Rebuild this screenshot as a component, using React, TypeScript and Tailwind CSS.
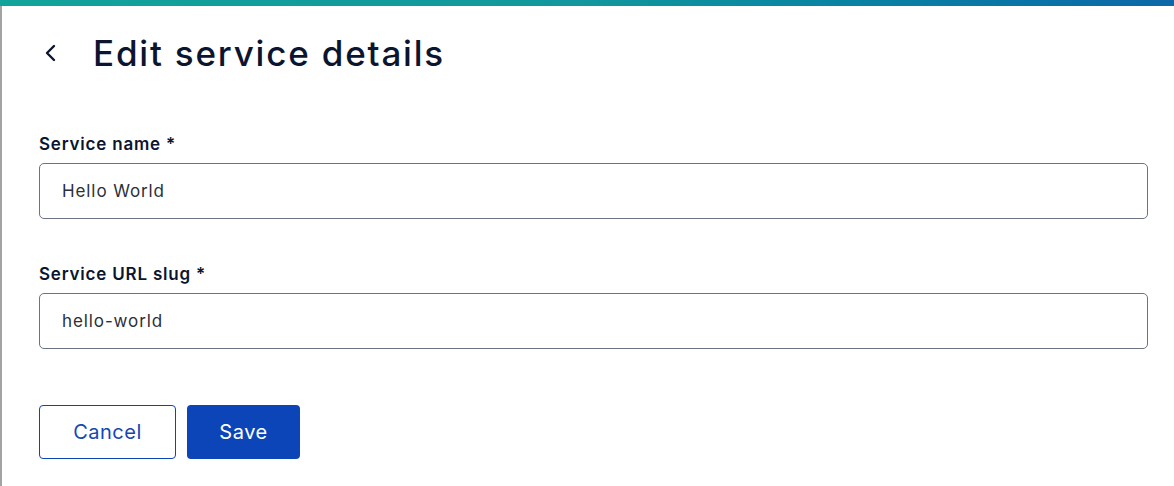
import React, { useState } from 'react';

function BackIcon() {
  return (
    <svg width="14" height="18" viewBox="0 0 14 18" fill="none" aria-hidden="true">
      <path d="M11 2L4 9L11 16" stroke="#0b1530" strokeWidth="2.4" strokeLinecap="round" strokeLinejoin="round" />
    </svg>
  );
}

function Field({ label, value, onChange }: { label: string; value: string; onChange: (v: string) => void }) {
  return (
    <div className="flex flex-col">
      <label className="text-[17px] font-semibold text-[#0b1530] leading-6 tracking-[0.8px] mb-[7px]">{label}</label>
      <input
        value={value}
        onChange={e => onChange(e.target.value)}
        className="h-[56px] w-full rounded-[5px] border border-[#6b7385] px-[22px] text-[17px] tracking-[0.9px] text-[#2a2f3a] outline-none"
      />
    </div>
  );
}

export default function App() {
  const [name, setName] = useState('Hello World');
  const [slug, setSlug] = useState('hello-world');

  return (
    <div className="w-[1174px] h-[486px] bg-white flex flex-col overflow-hidden" style={{ fontFamily: 'Inter, "Noto Sans", sans-serif' }}>
      <div className="h-[6px] w-full bg-gradient-to-r from-[#12a39a] via-[#11979c] to-[#0d67a8]" />
      <div className="flex-1 border-l-2 border-[#a3a3a3] pl-[37px] pr-[24px]">
        <div className="flex items-center h-[92px] pt-[2px]">
          <button className="w-[20px] ml-[4px] flex items-center">
            <BackIcon />
          </button>
          <h1 className="ml-[30px] text-[35px] font-medium text-[#0b1530] tracking-[1.8px]">Edit service details</h1>
        </div>
        <div className="flex flex-col gap-[43px] mt-[34px] w-[1109px]">
          <Field label="Service name *" value={name} onChange={setName} />
          <Field label="Service URL slug *" value={slug} onChange={setSlug} />
        </div>
        <div className="flex gap-[11px] mt-[56px]">
          <button className="h-[54px] w-[137px] rounded-[4px] border border-[#0b45b8] text-[#1447b3] text-[20px] tracking-[0.5px] bg-white">
            Cancel
          </button>
          <button className="h-[54px] w-[113px] rounded-[4px] bg-[#0b45b8] text-white text-[20px] tracking-[0.5px]">
            Save
          </button>
        </div>
      </div>
    </div>
  );
}
